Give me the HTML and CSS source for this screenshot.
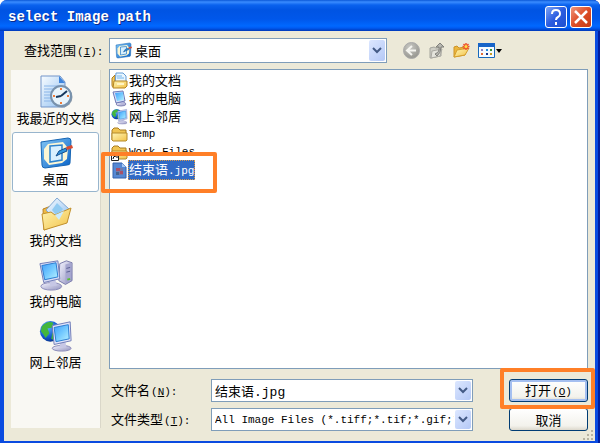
FILE: index.html
```html
<!DOCTYPE html>
<html lang="zh-CN">
<head>
<meta charset="utf-8">
<meta name="viewport" content="width=device-width, initial-scale=1">
<title>select Image path</title>
<link rel="stylesheet" href="styles.css">
</head>
<body>
<svg class="defs" aria-hidden="true">
  <defs>
    <linearGradient id="screen" x1="0" y1="0" x2="1" y2="1"><stop offset="0" stop-color="#3f9dfa"/><stop offset=".5" stop-color="#73c9ff"/><stop offset="1" stop-color="#b9f2ff"/></linearGradient>
    <linearGradient id="folder" x1="0" y1="0" x2="1" y2="1"><stop offset="0" stop-color="#fff6b5"/><stop offset="1" stop-color="#f2c147"/></linearGradient>
    <linearGradient id="metal" x1="0" y1="0" x2="1" y2="1"><stop offset="0" stop-color="#f5f5ff"/><stop offset="1" stop-color="#9292bf"/></linearGradient>
    <linearGradient id="paper" x1="0" y1="0" x2="1" y2="1"><stop offset="0" stop-color="#f8fcff"/><stop offset="1" stop-color="#91c0f1"/></linearGradient>
    <linearGradient id="pad" x1="0" y1="0" x2="1" y2="1"><stop offset="0" stop-color="#83c6f4"/><stop offset="1" stop-color="#0862c8"/></linearGradient>
    <radialGradient id="earth" cx=".35" cy=".3" r=".8"><stop offset="0" stop-color="#64b9ff"/><stop offset=".6" stop-color="#1259ce"/><stop offset="1" stop-color="#06297c"/></radialGradient>
    <radialGradient id="grey" cx=".4" cy=".3" r=".7"><stop offset="0" stop-color="#c9c9c5"/><stop offset="1" stop-color="#96968f"/></radialGradient>
    <symbol id="i-recent" viewBox="0 0 34 34">
      <path d="M2 1h19l5 6v25H2z" fill="url(#paper)" stroke="#7295c9"/><path d="M20 1v7h6z" fill="#3e84dc"/>
      <path d="M5 11h15M5 14h13M5 17h10M5 20h8M5 23h8M5 26h9" stroke="#8ab5e8"/>
      <circle cx="23" cy="22" r="10.5" fill="#8b99a8"/><circle cx="22" cy="21" r="10" fill="#e8f4fc" stroke="#7892ad" stroke-width="2"/>
      <path d="M22 21l6-5M22 21l-5 1" stroke="#17385d" stroke-width="2"/><path d="M22 13v2M22 27v2M14 21h2M28 21h2" stroke="#ef7b38" stroke-width="2"/>
    </symbol>
    <symbol id="i-desktop" viewBox="0 0 34 34">
      <path d="M2 6L29 2q3 0 3 3l-1 22q0 2-3 2L6 32q-3 0-3-3z" fill="url(#pad)" stroke="#1766b4"/>
      <path d="M9 8l15-2 5 6-1 11-5 4-13 2-5-6V13z" fill="#fcf6d4"/>
      <path d="M11 10l12-1v15l-12 2z" fill="#d8f0ff" stroke="#2e83cd" stroke-width="1.5"/>
      <path d="M17 20l3-5 7-3 1 3-7 3z" fill="#2f92dc" stroke="#144f8f"/><path d="M27 11l6-2 1 3-6 2z" fill="#d84b31"/>
    </symbol>
    <symbol id="i-docs" viewBox="0 0 34 34">
      <path d="M4 12l8-3 3 3 11-3v16L5 33z" fill="#eeb944" stroke="#b98428"/>
      <path d="M18 1L30 12 19 25 7 13z" fill="url(#paper)" stroke="#82a9d4"/><path d="M18 6l6 6-6 7-5-6z" fill="#91cbf2"/>
      <path d="M3 17l9-2 4 3 16-7-4 15-23 7z" fill="url(#folder)" stroke="#c1902c"/>
      <path d="M16 18l9-4-5 9z" fill="#caebff"/>
    </symbol>
    <symbol id="i-computer" viewBox="0 0 36 34">
      <path d="M22 5l7-3 6 2v19l-7 4-7-4z" fill="url(#metal)" stroke="#7778a9"/><path d="M28 6l6-2v19l-6 3z" fill="#a6a6cf"/><path d="M29 10l4-1M29 14l4-1" stroke="#565c91"/><path d="M30 22l3-1" stroke="#58be30" stroke-width="2"/>
      <ellipse cx="13" cy="29" rx="11" ry="4" fill="url(#metal)" stroke="#8888b8"/><path d="M11 23l6-2 2 7-7 1z" fill="#c7c7e5"/>
      <path d="M1 5l19-3 2 19-17 4z" fill="#d8dcf6" stroke="#6c79b6"/><path d="M3 7l15-3 2 15-14 3z" fill="url(#screen)" stroke="#2679cf"/>
    </symbol>
    <symbol id="i-pc" viewBox="0 0 17 17">
      <ellipse cx="10" cy="14" rx="5" ry="2" fill="url(#metal)" stroke="#8888b8"/><path d="M9 11l3-1 1 4h-3z" fill="#b9b9dc"/>
      <path d="M2 2l10-1 2 10-9 2z" fill="#d8dcf6" stroke="#6c79b6"/><path d="M4 3l8-1 1 8-7 1z" fill="url(#screen)"/>
    </symbol>
    <symbol id="i-network" viewBox="0 0 36 34">
      <circle cx="12" cy="12" r="11" fill="url(#earth)"/>
      <path d="M3 7Q9 0 15 3l-1 5-5 1 2 5-4 5Q4 14 2 12zM14 14l4-3 4 4-5 7-4-2z" fill="#43b63c"/>
      <ellipse cx="24" cy="30" rx="10" ry="3" fill="url(#metal)" stroke="#8888b8"/><path d="M22 24l6-1 1 6h-7z" fill="#c7c7e5"/>
      <path d="M14 6l19-4 1 20-18 4z" fill="#e0e4fa" stroke="#6c79b6"/><path d="M16 8l15-3 1 15-14 3z" fill="url(#screen)" stroke="#2679cf"/>
    </symbol>
    <symbol id="i-mydocs" viewBox="0 0 17 17">
      <path d="M1 6l3-3v12H2q-1 0-1-2z" fill="#f4cc62" stroke="#ac7d21"/>
      <path d="M5 1h7l3 3v9H4z" fill="#e9f6ff" stroke="#639bd5"/><path d="M6 4h5M6 6h7" stroke="#72b4ec"/>
      <path d="M3 9h13v5l-2 2H2z" fill="url(#folder)" stroke="#b58424"/><path d="M6 11h7v2H6z" fill="#fff4c4"/>
    </symbol>
    <symbol id="i-folder" viewBox="0 0 17 17">
      <path d="M1 14V4l2-2h4l2 2h6v10z" fill="#f0c451" stroke="#a87c20"/><path d="M1 7h15v7l-1 1H2l-1-1z" fill="url(#folder)" stroke="#b58a2a"/>
    </symbol>
    <symbol id="i-jpg" viewBox="0 0 17 17">
      <path d="M2 1h9l4 4v11H2z" fill="#5588d4" stroke="#3462ac"/><path d="M11 1v4h4z" fill="#a6c7f3"/>
      <path d="M5 6h7v7H5z" fill="#737ba8"/><path d="M5 6h4v3H5zM9 9h3v3H9z" fill="#a85169"/><path d="M5 10h3v3H5z" fill="#436392"/>
    </symbol>
  </defs>
</svg>
<main class="dialog">
  <header class="titlebar">
    <h1>select Image path</h1>
    <button class="caption" type="button" aria-label="帮助"><svg viewBox="0 0 20 20"><path d="M6 7q0-4 4-4t4 4q0 2-2 3t-2 3M10 15v3" fill="none" stroke="#fff" stroke-width="2"/></svg></button>
    <button class="caption close" type="button" aria-label="关闭"><svg viewBox="0 0 20 20"><path d="M4 4l12 12M16 4L4 16" stroke="#fff" stroke-width="2.500"/></svg></button>
  </header>
  <form class="content">
    <div class="lookup">
      <label for="place">查找范围<span class="latin">(<u>I</u>):</span></label>
      <div class="combo place">
        <svg class="small" aria-hidden="true"><use href="#i-desktop"/></svg>
        <select id="place"><option>桌面</option></select>
        <span class="arrow"><svg viewBox="0 0 10 8"><path d="M1 1l4 4 4-4" /></svg></span>
      </div>
      <div class="tools">
        <button type="button" aria-label="后退"><svg viewBox="0 0 17 17"><circle cx="8.500" cy="8.500" r="8" fill="url(#grey)" stroke="#aaa"/><path d="M13 8.500H5M9 4L4 8.500 9 13" fill="none" stroke="#f4f4ef" stroke-width="2"/></svg></button>
        <button type="button" aria-label="向上一级"><svg viewBox="0 0 17 17"><path d="M2 6l4-1 2 1 5-1v9L3 16H2z" fill="#cfcfc6" stroke="#a4a49d"/><path d="M4 9l10-2-2 7-9 2z" fill="#e4e4dc" stroke="#aaa9a2"/><path d="M7 12q5-2 4-7H8l4-4 4 4h-3q0 6-4 9z" fill="#b7b7b0" stroke="#80807b"/></svg></button>
        <button type="button" aria-label="新建文件夹"><svg viewBox="0 0 17 17"><path d="M1 15V5l3-1 2 2 6-1v8z" fill="#ecb63d" stroke="#cc9328"/><path d="M1 15l3-7 12-2-4 7z" fill="url(#folder)" stroke="#d59f2d"/><path d="M13 1v7M9.500 4.500h7M10.500 2l5 5M15.500 2l-5 5" stroke="#ee542c" stroke-width="1.500"/><circle cx="13" cy="4.500" r="1.500" fill="#ffdf45"/></svg></button>
        <button class="views" type="button" aria-label="查看菜单"><svg viewBox="0 0 17 17"><path d="M.5 1.500h16v14H.5z" fill="#f6fbff" stroke="#1669bc"/><path d="M0 1h17v4H0z" fill="#1764c8"/><path d="M3 7h2v2H3z" fill="#8b80c5"/><path d="M8 7h2v2H8z" fill="#258ddd"/><path d="M12 7h2v2h-2z" fill="#348f36"/><path d="M3 11h2v2H3z" fill="#e56c34"/><path d="M8 11h2v2H8z" fill="#17378d"/><path d="M12 11h2v2h-2z" fill="#c69a23"/></svg><svg class="drop" viewBox="0 0 6 4"><path d="M0 0h6L3 4z"/></svg></button>
      </div>
    </div>
    <nav class="places" aria-label="位置">
      <button type="button"><svg aria-hidden="true"><use href="#i-recent"/></svg>我最近的文档</button>
      <button type="button" class="current"><svg aria-hidden="true"><use href="#i-desktop"/></svg>桌面</button>
      <button type="button"><svg aria-hidden="true"><use href="#i-docs"/></svg>我的文档</button>
      <button type="button"><svg aria-hidden="true"><use href="#i-computer"/></svg>我的电脑</button>
      <button type="button"><svg aria-hidden="true"><use href="#i-network"/></svg>网上邻居</button>
    </nav>
    <ul class="files">
      <li><svg class="small" aria-hidden="true"><use href="#i-mydocs"/></svg><button type="button">我的文档</button></li>
      <li><svg class="small" aria-hidden="true"><use href="#i-pc"/></svg><button type="button">我的电脑</button></li>
      <li><svg class="small" aria-hidden="true"><use href="#i-network"/></svg><button type="button">网上邻居</button></li>
      <li><svg class="small" aria-hidden="true"><use href="#i-folder"/></svg><button type="button" class="latin">Temp</button></li>
      <li><svg class="small" viewBox="0 0 17 17" aria-hidden="true"><use href="#i-folder"/><path d="M.5 9.500h7v7h-7z" fill="#fff" stroke="#222"/><path d="M2 15q0-3 3-3M3 11h3v3" fill="none" stroke="#000"/></svg><button type="button" class="latin">Work Files</button></li>
      <li class="marked"><svg class="small" aria-hidden="true"><use href="#i-jpg"/></svg><button type="button" class="selected">结束语<span class="latin">.jpg</span></button></li>
    </ul>
    <div class="fields">
      <label for="name">文件名<span class="latin">(<u>N</u>):</span></label>
      <div class="combo">
        <input id="name" type="text" value="结束语.jpg">
        <button class="arrow" type="button" aria-label="最近的文件名"><svg viewBox="0 0 10 8"><path d="M1 1l4 4 4-4" /></svg></button>
      </div>
      <div class="primary"><button class="push default" type="submit">打开<span class="latin">(<u>O</u>)</span></button></div>
      <label for="type">文件类型<span class="latin">(<u>T</u>):</span></label>
      <div class="combo">
        <select id="type" class="latin"><option>All Image Files (*.tiff;*.tif;*.gif;*</option></select>
        <span class="arrow"><svg viewBox="0 0 10 8"><path d="M1 1l4 4 4-4" /></svg></span>
      </div>
      <button class="push" type="button">取消</button>
    </div>
    <svg class="grip" viewBox="0 0 12 12" aria-hidden="true"><path d="M9 1h2v2H9zM5 5h2v2H5zM9 5h2v2H9zM1 9h2v2H1zM5 9h2v2H5zM9 9h2v2H9z"/></svg>
  </form>
</main>
</body>
</html>
```
FILE: styles.css
```css
*, *::after { box-sizing: border-box; }
body {
  margin: 0;
  background: #fff;
  color: #000;
  font: 13px/18px "Noto Sans CJK SC", sans-serif;
}
button, input, select {
  margin: 0;
  padding: 0;
  border: 0;
  border-radius: 0;
  background: none;
  color: inherit;
  font: inherit;
}
svg { display: block; flex: none; }
.defs { position: absolute; width: 0; height: 0; }
.latin {
  font-family: "Liberation Mono", monospace;
  font-size: 11px;
  white-space: pre;
}
label .latin, .push .latin { margin-left: 1px; }
.small { width: 17px; height: 17px; }

.dialog {
  display: flex;
  flex-direction: column;
  min-height: 100vh;
  border-radius: 7px 7px 0 0;
  background: #0a4be0;
  box-shadow: inset -2px 0 #001ea0;
  overflow: hidden;
}
.titlebar {
  display: flex;
  align-items: center;
  gap: 3px;
  height: 31px;
  padding: 2px 8px 0;
  background: linear-gradient(#0b58d8 0, #3a8cff 2px, #0a62ee 5px, #0054e3 10px, #0057ea 19px, #0068ff 26px, #005bf2 28px, #0038b8 31px);
}
h1 {
  flex: 1;
  margin: 0;
  color: #fff;
  font: bold 14px/18px "Liberation Mono", monospace;
  text-shadow: 1px 1px #0a2a8a;
}
.caption {
  width: 22px;
  height: 22px;
  border: 1px solid #fff;
  border-radius: 3px;
  background: linear-gradient(135deg, #7da4f5, #2a5ce0 50%, #1e4fd0);
}
.close { background: linear-gradient(135deg, #f0977c, #dd4d27 50%, #c73c16); }

.content {
  position: relative;
  flex: 1;
  display: grid;
  grid-template-columns: 90px 1fr;
  grid-template-rows: auto 1fr auto;
  column-gap: 8px;
  margin: 0 5px 2px 4px;
  padding: 7px 7px 10px;
  background: #ece9d8;
}
.lookup {
  grid-column: 1 / 3;
  display: flex;
  align-items: center;
  margin-bottom: 6px;
}
.lookup label { width: 98px; padding-left: 13px; white-space: nowrap; }
.place { flex: 1; height: 25px; padding-left: 5px; }
.tools {
  display: flex;
  gap: 8px;
  width: 201px;
  padding-left: 16px;
}
.tools button { display: flex; align-items: center; gap: 1px; }
.tools svg { width: 17px; height: 17px; }
.tools .drop { width: 6px; height: 4px; }

.combo {
  display: flex;
  align-items: center;
  min-width: 0;
  border: 1px solid #7f9db9;
  background: #fff;
}
.combo input, .combo select {
  appearance: none;
  flex: 1;
  min-width: 0;
  width: 0;
  height: 20px;
  padding-left: 3px;
  outline: 0;
}
.combo input { font-family: "Liberation Mono", "Noto Sans CJK SC", monospace; }
.arrow {
  align-self: stretch;
  display: grid;
  place-items: center;
  width: 16px;
  margin: 1px;
  border-radius: 2px;
  background: linear-gradient(135deg, #dce7ff, #b4c8f6);
  pointer-events: none;
}
.arrow svg { width: 10px; height: 8px; fill: none; stroke: #435a85; stroke-width: 2; }

.places {
  grid-row: 2 / 4;
  display: flex;
  flex-direction: column;
  gap: 1px;
  margin: 1px 0 3px;
  padding: 1px;
  border-right: 1px solid #dad7c9;
  background: #f9f8f3;
}
.places button {
  display: flex;
  flex-direction: column;
  align-items: center;
  height: 60px;
  padding-top: 3px;
  border: 1px solid transparent;
  white-space: nowrap;
}
.places svg { width: 34px; height: 34px; }
.places .current {
  border-color: #98b5cd;
  border-radius: 3px;
  background: #fff;
}

.files {
  margin: 0;
  padding: 1px;
  border: 1px solid #7f9db9;
  background: #fff;
  list-style: none;
}
.files li { display: flex; align-items: center; height: 18px; }
.files button { padding: 0 1px; line-height: 18px; }
.files .selected {
  outline: 1px dotted #d99a4c;
  outline-offset: -1px;
  background: #316ac5;
  color: #fff;
}
.marked, .primary { position: relative; }
.marked::after, .primary::after {
  content: "";
  position: absolute;
  border: 4px solid #ff7f27;
  border-radius: 2px;
  pointer-events: none;
}
.marked::after { top: -9px; left: -10px; width: 116px; height: 41px; }
.primary::after { inset: -11px -7px -7px -9px; }

.fields {
  grid-column: 2;
  display: grid;
  grid-template-columns: 102px 1fr 79px;
  grid-auto-rows: 23px;
  row-gap: 6px;
  align-items: center;
  margin-top: 10px;
}
.fields label { padding-left: 2px; }
.fields .combo { height: 23px; margin-right: 36px; }
.push {
  width: 100%;
  height: 23px;
  border: 1px solid #003c74;
  border-radius: 3px;
  background: linear-gradient(#fff, #f3f2ec 80%, #dcd8cc);
  line-height: 20px;
}
.primary { height: 23px; }
.default { box-shadow: inset 0 0 0 2px #a5bff0; }
.grip {
  position: absolute;
  right: 1px;
  bottom: 0;
  width: 12px;
  height: 12px;
  fill: #b8b4a2;
}
```
